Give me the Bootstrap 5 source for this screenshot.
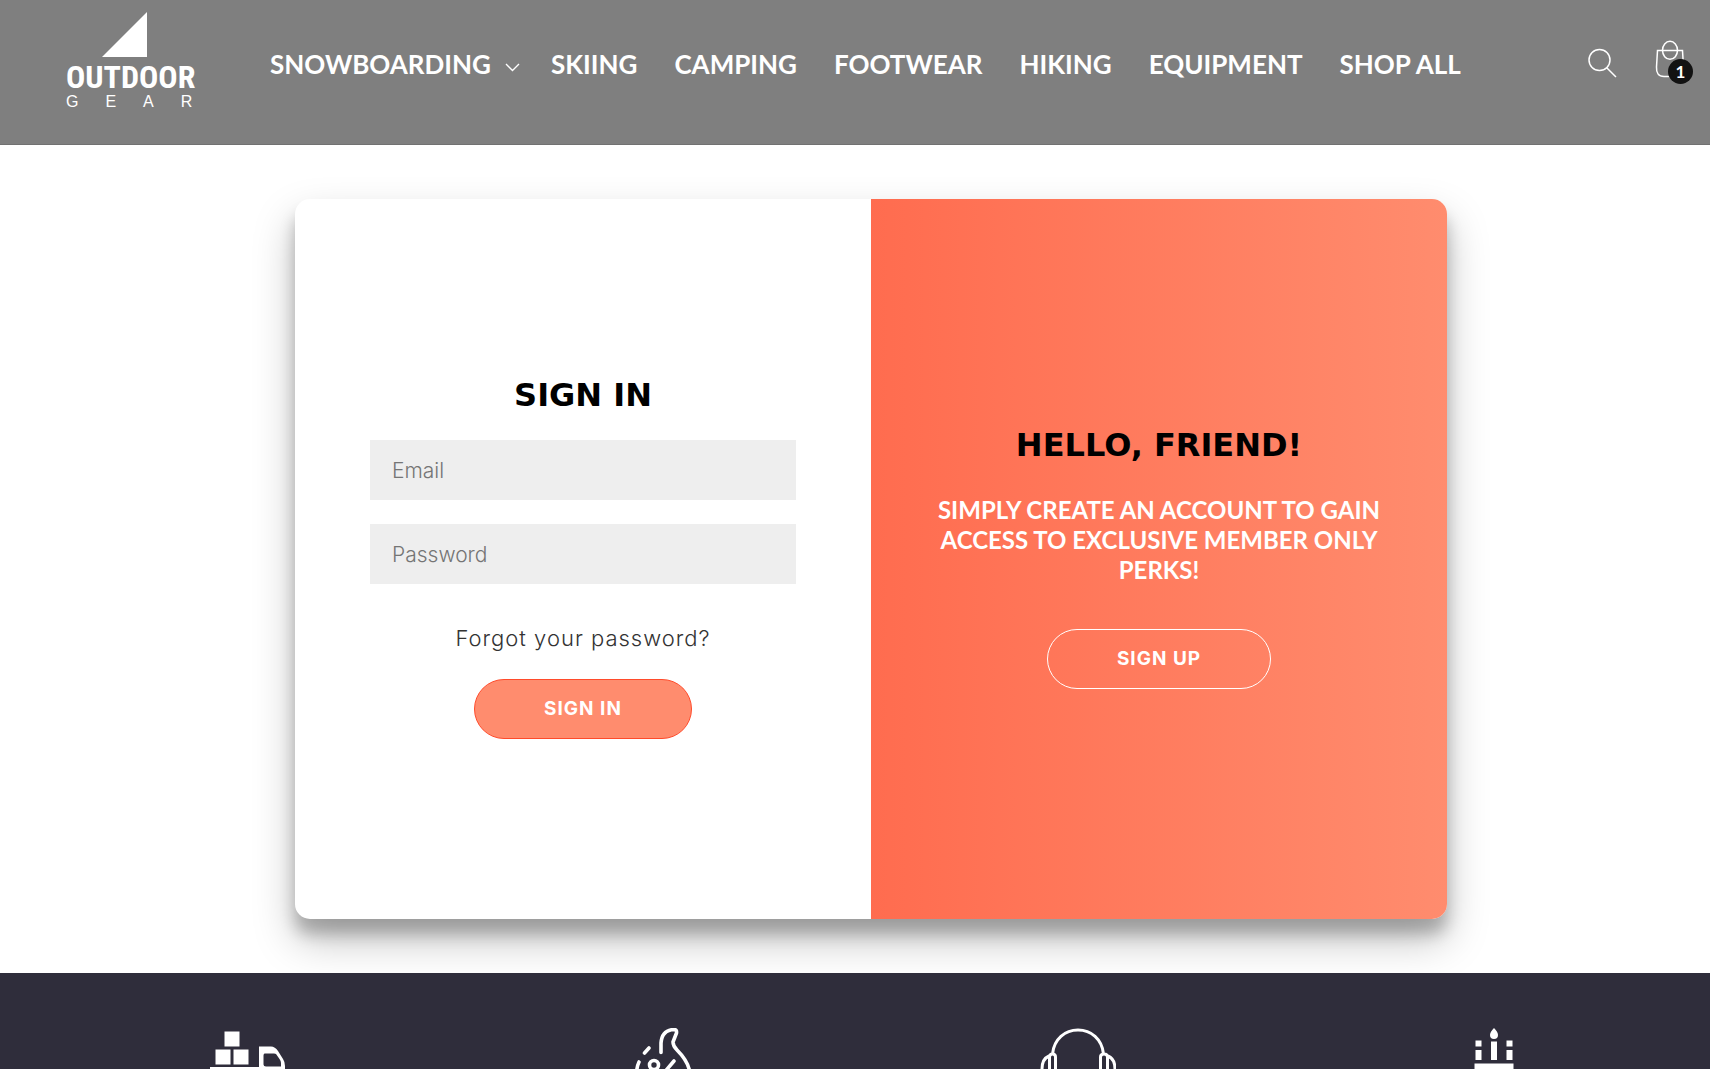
<!DOCTYPE html>
<html lang="en">
<head>
<meta charset="utf-8">
<meta name="viewport" content="width=device-width, initial-scale=1">
<title>Outdoor Gear – Sign in</title>
<link href="https://cdn.jsdelivr.net/npm/bootstrap@5.3.0/dist/css/bootstrap.min.css" rel="stylesheet">
<style>
body{font-family:Inter,"Open Sans",sans-serif;background:#fff;color:#000}
.site-header{background:#7f7f7f;border-bottom:1px solid #717171;padding:12px 16px 28px 66px;color:#fff}
.brand{width:126px;height:104px;margin-right:78px;color:#fff}
.brand svg{margin-left:36px}
.brand-name{font:700 32px/34px "Roboto Condensed","Liberation Sans Narrow",Roboto,sans-serif;margin-top:2px}
.brand-sub{font:400 16px/16px "Liberation Sans",Arial,sans-serif;letter-spacing:27px}
.menu{gap:37px}
.menu a{font:700 26px/36px Lato,sans-serif;color:#fff;white-space:nowrap}
.menu svg{margin-left:14px;margin-right:-6px}
.tools{gap:35px}
.bag{overflow:visible}
.count{left:14px;top:15px;width:25px;height:25px;background:#121212;font:700 17px/25px Lato,sans-serif;color:#fff}
.stage{padding:54px 16px 54px 48px}
.auth{max-width:1152px;min-height:720px;border-radius:15px;background:#fff;box-shadow:0 21px 42px rgba(0,0,0,.25),0 15px 15px rgba(0,0,0,.22)}
.pane-form{padding:0 75px}
.welcome{padding:0 60px;background:linear-gradient(to right,#ff6c4f,#ff8c6e);border-radius:0 15px 15px 0;color:#fff}
.title{font:700 32px/32px "DejaVu Sans",sans-serif;color:#000}
.pane-form .title{margin-bottom:29px}
.welcome .title{margin-bottom:34px}
.field{height:60px;background:#eee;border:0;border-radius:0;padding:0 22px;font-size:21px;font-weight:300}
.field::placeholder{color:#757575;opacity:1}
.field-last{margin-top:24px}
.forgot{font-size:22px;line-height:30px;font-weight:300;color:#333;letter-spacing:1px;margin:39px 0 26px}
.pitch{font:700 24px/30px Lato,sans-serif;margin-bottom:44px}
.pill{height:60px;border-radius:30px;padding:0 69px;font-size:19px;font-weight:700;letter-spacing:1px;color:#fff;line-height:58px}
.pill-solid{background:#ff8c6e;border:1px solid #ff4b2b}
.pill-line{border:1px solid #fff}
.perks{background:#2f2d3b;padding:55px 10px 0 41px;min-height:0}
</style>
<script src="https://cdn.jsdelivr.net/npm/bootstrap@5.3.0/dist/js/bootstrap.bundle.min.js"></script>
</head>
<body class="d-flex flex-column vh-100 overflow-hidden">
<header class="site-header d-flex align-items-center flex-shrink-0">
  <a href="#" class="brand d-flex flex-column text-decoration-none flex-shrink-0">
    <svg width="46" height="46" aria-hidden="true"><path d="M45 0V45H0Z" fill="#fff"/></svg>
    <span class="brand-name">OUTDOOR</span>
    <span class="brand-sub">GEAR</span>
  </a>
  <nav class="menu d-flex align-items-center">
    <a href="#" class="text-decoration-none">SNOWBOARDING<svg width="15" height="9" viewBox="0 0 15 9" fill="none" stroke="#fff" stroke-width="1.4" aria-hidden="true"><path d="M1 1 7.500 7.500 14 1"/></svg></a>
    <a href="#" class="text-decoration-none">SKIING</a>
    <a href="#" class="text-decoration-none">CAMPING</a>
    <a href="#" class="text-decoration-none">FOOTWEAR</a>
    <a href="#" class="text-decoration-none">HIKING</a>
    <a href="#" class="text-decoration-none">EQUIPMENT</a>
    <a href="#" class="text-decoration-none">SHOP ALL</a>
  </nav>
  <div class="tools d-flex align-items-center ms-auto">
    <button type="button" class="btn p-0 border-0 d-flex" aria-label="Search"><svg width="32" height="40" viewBox="0 0 32 40" fill="none" stroke="#fff" stroke-width="1.500"><circle cx="12.500" cy="16" r="10.500"/><path d="M19.500 23.500 29 33"/></svg></button>
    <a href="#" class="position-relative d-flex me-2" aria-label="Cart"><svg class="bag" width="32" height="40" viewBox="0 0 32 40" fill="none" stroke="#fff" stroke-width="1.500"><path d="M3.500 6.500H28.500L29.500 23Q30 32.500 22 32.500H10Q2 32.500 2.500 23Z"/><ellipse cx="16" cy="6.300" rx="7.500" ry="9"/></svg><span class="count position-absolute rounded-circle text-center">1</span></a>
  </div>
</header>
<main class="stage flex-shrink-0">
  <div class="auth row g-0 mx-auto">
    <form class="pane-form col-6 d-flex flex-column align-items-center justify-content-center">
      <h1 class="title">SIGN IN</h1>
      <input type="email" class="form-control field" placeholder="Email" aria-label="Email">
      <input type="password" class="form-control field field-last" placeholder="Password" aria-label="Password">
      <a href="#" class="forgot text-decoration-none">Forgot your password?</a>
      <button type="submit" class="btn pill pill-solid">SIGN IN</button>
    </form>
    <section class="welcome col-6 d-flex flex-column align-items-center justify-content-center text-center">
      <h2 class="title">HELLO, FRIEND!</h2>
      <p class="pitch">SIMPLY CREATE AN ACCOUNT TO GAIN ACCESS TO EXCLUSIVE MEMBER ONLY PERKS!</p>
      <button type="button" class="btn pill pill-line">SIGN UP</button>
    </section>
  </div>
</main>
<footer class="perks flex-grow-1 overflow-hidden">
  <div class="row g-0 text-center">
    <div class="col-3"><svg width="76" height="72" viewBox="0 0 76 72" fill="#fff" aria-hidden="true"><path d="M14.500 3.500h15v15h-15zM5.500 21.500h15v15h-15zM23.500 21.500h15v15h-15zM0 39h50v5H0z"/><path fill-rule="evenodd" d="M49 18.500H61Q65 18.500 68 23L73 31Q75 34 75 38V60H49ZM54.500 25.500Q53.500 26 53.500 27.500V36.500Q53.500 38.500 56 38.500H71V35Q71 33 69.500 31L66 26Q65.500 25.500 64 25.500Z"/></svg></div>
    <div class="col-3"><svg width="76" height="72" viewBox="0 0 76 72" fill="none" stroke="#fff" stroke-width="3.600" stroke-linecap="round" stroke-linejoin="round" aria-hidden="true"><path d="M36 24.500V15Q37 2 49 1.500Q52 1.500 51.500 5L48 14Q48 18 52 22Q64 34 65 46M19.500 25 24 20M14 34Q12 38 11.500 45M49 33 38 46"/><circle cx="29" cy="37" r="4.500"/></svg></div>
    <div class="col-3"><svg width="76" height="72" viewBox="0 0 76 72" fill="none" stroke="#fff" stroke-width="3" aria-hidden="true"><path d="M12.500 26C14 11 25 2 38 2S62 11 63.500 26M9.500 60V29Q9.500 26 12.500 26T15.500 29V60M60.500 60V29Q60.500 26 64 26T67.500 29V60M9 28Q2 31 2 41V56M68 28Q75 31 75 41V56"/></svg></div>
    <div class="col-3"><svg width="76" height="72" viewBox="0 0 76 72" fill="#fff" aria-hidden="true"><path d="M39 0Q43 4 43 7A4 4 0 0 1 35 7Q35 4 39 0ZM36 13.500h6V32h-6zM20.500 12.500h6v6h-6zM20.500 22h6v10h-6zM51.500 12.500h6v6h-6zM51.500 22h6v10h-6zM19.500 35.500h39V60h-39z"/></svg></div>
  </div>
</footer>
</body>
</html>
